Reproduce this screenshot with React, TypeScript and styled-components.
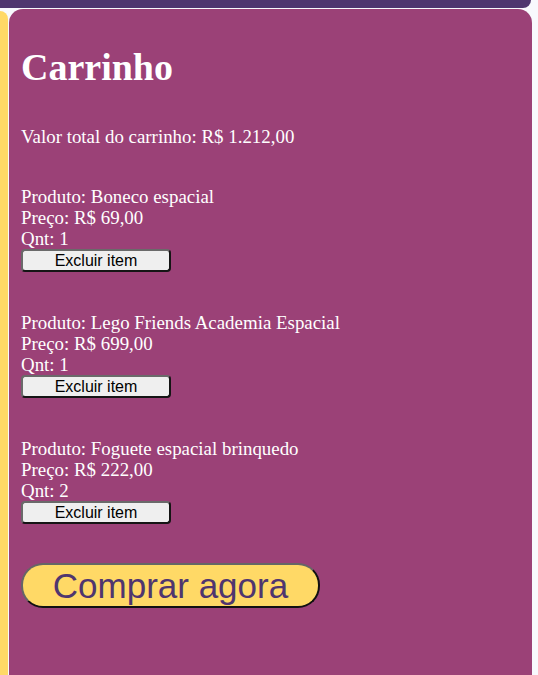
import React from "react";
import styled, { createGlobalStyle } from "styled-components";

const Global = createGlobalStyle`
  html, body { margin: 0; padding: 0; background: #f8f9fd; }
  body { font-family: "Liberation Serif", "Times New Roman", serif; overflow: hidden; }
`;

const Page = styled.div`
  width: 538px;
  height: 675px;
  display: grid;
  grid-template-columns: 8px 523px 7px;
  grid-template-rows: 8px 1fr;
  column-gap: 1px;
  row-gap: 1px;
  background: #f8f9fd;
  overflow: hidden;
`;

const Header = styled.div`
  grid-column: 1 / 3;
  background: #4f366f;
  border-bottom-right-radius: 10px;
  margin-right: 1px;
`;

const Sidebar = styled.div`
  grid-column: 1;
  background: #ffd966;
  border-top-right-radius: 10px;
  margin-top: 2px;
`;

const Main = styled.main`
  grid-column: 2;
  background: #9b4177;
  border-top-left-radius: 14px;
  border-top-right-radius: 14px;
  padding: 0 12px;
  color: #ffffff;
  font-size: 18.9px;
  line-height: 21px;
  display: flex;
  flex-direction: column;
  align-items: flex-start;
`;

const Gutter = styled.div`
  grid-column: 3;
  padding-top: 302px;
  display: flex;
  justify-content: flex-end;
`;

const Marker = styled.div`
  width: 1px;
  height: 30px;
  background: #9a9aa0;
`;

const Title = styled.h1`
  margin: 36px 0 0;
  font-size: 38px;
  line-height: 44px;
  font-weight: bold;
`;

const Total = styled.p`
  margin: 37px 0 0;
`;

const Item = styled.section`
  margin-top: 39px;
  display: flex;
  flex-direction: column;
  align-items: flex-start;
  & + & {
    margin-top: 40px;
  }
`;

const Line = styled.div``;

const RemoveButton = styled.button`
  width: 150px;
  height: 23px;
  margin-top: 0;
  padding: 0;
  font-family: "Liberation Sans", Arial, sans-serif;
  font-size: 16px;
  line-height: 18px;
  color: #000;
  background: #efefef;
  border: 2px outset #6a6a6a;
  border-radius: 4px;
`;

const BuyButton = styled.button`
  margin-top: 39px;
  width: 299px;
  height: 45px;
  padding: 0;
  font-family: "Liberation Sans", Arial, sans-serif;
  font-size: 35px;
  line-height: 38px;
  color: #4f366f;
  background: #ffd966;
  border: 2px outset #666;
  border-radius: 22px;
`;

const items = [
  { name: "Boneco espacial", price: "R$ 69,00", qty: 1 },
  { name: "Lego Friends Academia Espacial", price: "R$ 699,00", qty: 1 },
  { name: "Foguete espacial brinquedo", price: "R$ 222,00", qty: 2 },
];

export default function App() {
  return (
    <>
      <Global />
      <Page>
        <Header />
        <Sidebar />
        <Main>
          <Title>Carrinho</Title>
          <Total>Valor total do carrinho: R$ 1.212,00</Total>
          {items.map((it) => (
            <Item key={it.name}>
              <Line>Produto: {it.name}</Line>
              <Line>Preço: {it.price}</Line>
              <Line>Qnt: {it.qty}</Line>
              <RemoveButton>Excluir item</RemoveButton>
            </Item>
          ))}
          <BuyButton>Comprar agora</BuyButton>
        </Main>
        <Gutter>
          <Marker />
        </Gutter>
      </Page>
    </>
  );
}
